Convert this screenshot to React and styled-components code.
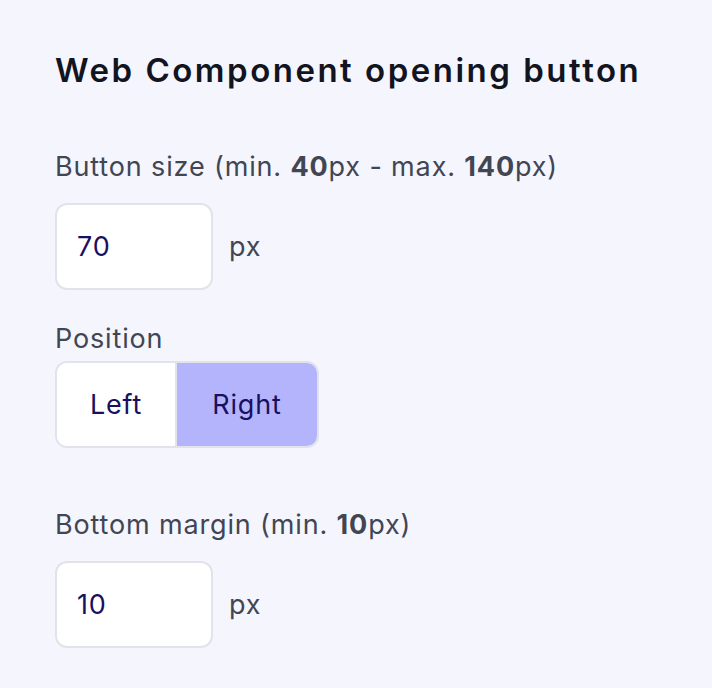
import React, { useState } from 'react'
import styled, { createGlobalStyle } from 'styled-components'

const GlobalStyle = createGlobalStyle`
  html, body {
    margin: 0;
    padding: 0;
    background: #f5f5fe;
  }
  body {
    font-family: Inter, "Noto Sans", sans-serif;
  }
`

const Panel = styled.div`
  padding: 50px 55px 40px;
  display: flex;
  flex-flow: column;
`

const Title = styled.h2`
  margin: 0 0 59px;
  font-size: 33px;
  line-height: 40px;
  font-weight: 600;
  letter-spacing: 2.5px;
  color: #121420;
`

const Field = styled.div`
  display: flex;
  flex-flow: column;
  margin-bottom: ${p => p.$gap || 0}px;
`

const Label = styled.label`
  font-size: 27px;
  line-height: 36px;
  font-weight: 400;
  letter-spacing: 0.85px;
  color: #414652;
  margin-bottom: ${p => (p.$tight ? 4 : 18)}px;
  b {
    font-weight: 700;
  }
`

const InputRow = styled.div`
  display: flex;
  align-items: center;
  gap: 16px;
`

const NumberInput = styled.input`
  box-sizing: border-box;
  width: 158px;
  height: 87px;
  padding: 0 20px;
  border: 2px solid #e2e3ea;
  border-radius: 12px;
  background: #fff;
  font-family: inherit;
  font-size: 27px;
  letter-spacing: 0.8px;
  color: #1a1060;
  outline: none;
`

const Unit = styled.span`
  font-size: 27px;
  letter-spacing: 0.8px;
  color: #414652;
`

const Segmented = styled.div`
  display: flex;
  align-self: flex-start;
  border: 2px solid #e2e3ea;
  border-radius: 12px;
  overflow: hidden;
  background: #fff;
`

const Segment = styled.button`
  box-sizing: border-box;
  width: ${p => p.$w}px;
  height: 83px;
  padding: 0;
  border: none;
  border-left: ${p => (p.$first ? 'none' : '2px solid #e2e3ea')};
  background: ${p => (p.$active ? '#b4b4fc' : '#fff')};
  font-family: inherit;
  font-size: 27px;
  letter-spacing: 0.8px;
  color: #1a1060;
  cursor: pointer;
`

const App = () => {
  const [side, setSide] = useState('right')
  return (
    <>
      <GlobalStyle />
      <Panel>
        <Title>Web Component opening button</Title>
        <Field $gap={31}>
          <Label>Button size (min. <b>40</b>px - max. <b>140</b>px)</Label>
          <InputRow>
            <NumberInput type="text" defaultValue="70" />
            <Unit>px</Unit>
          </InputRow>
        </Field>
        <Field $gap={59}>
          <Label $tight>Position</Label>
          <Segmented>
            <Segment $first $w={118} $active={side === 'left'} onClick={() => setSide('left')}>Left</Segment>
            <Segment $w={142} $active={side === 'right'} onClick={() => setSide('right')}>Right</Segment>
          </Segmented>
        </Field>
        <Field>
          <Label>Bottom margin (min. <b>10</b>px)</Label>
          <InputRow>
            <NumberInput type="text" defaultValue="10" />
            <Unit>px</Unit>
          </InputRow>
        </Field>
      </Panel>
    </>
  )
}

export default App
